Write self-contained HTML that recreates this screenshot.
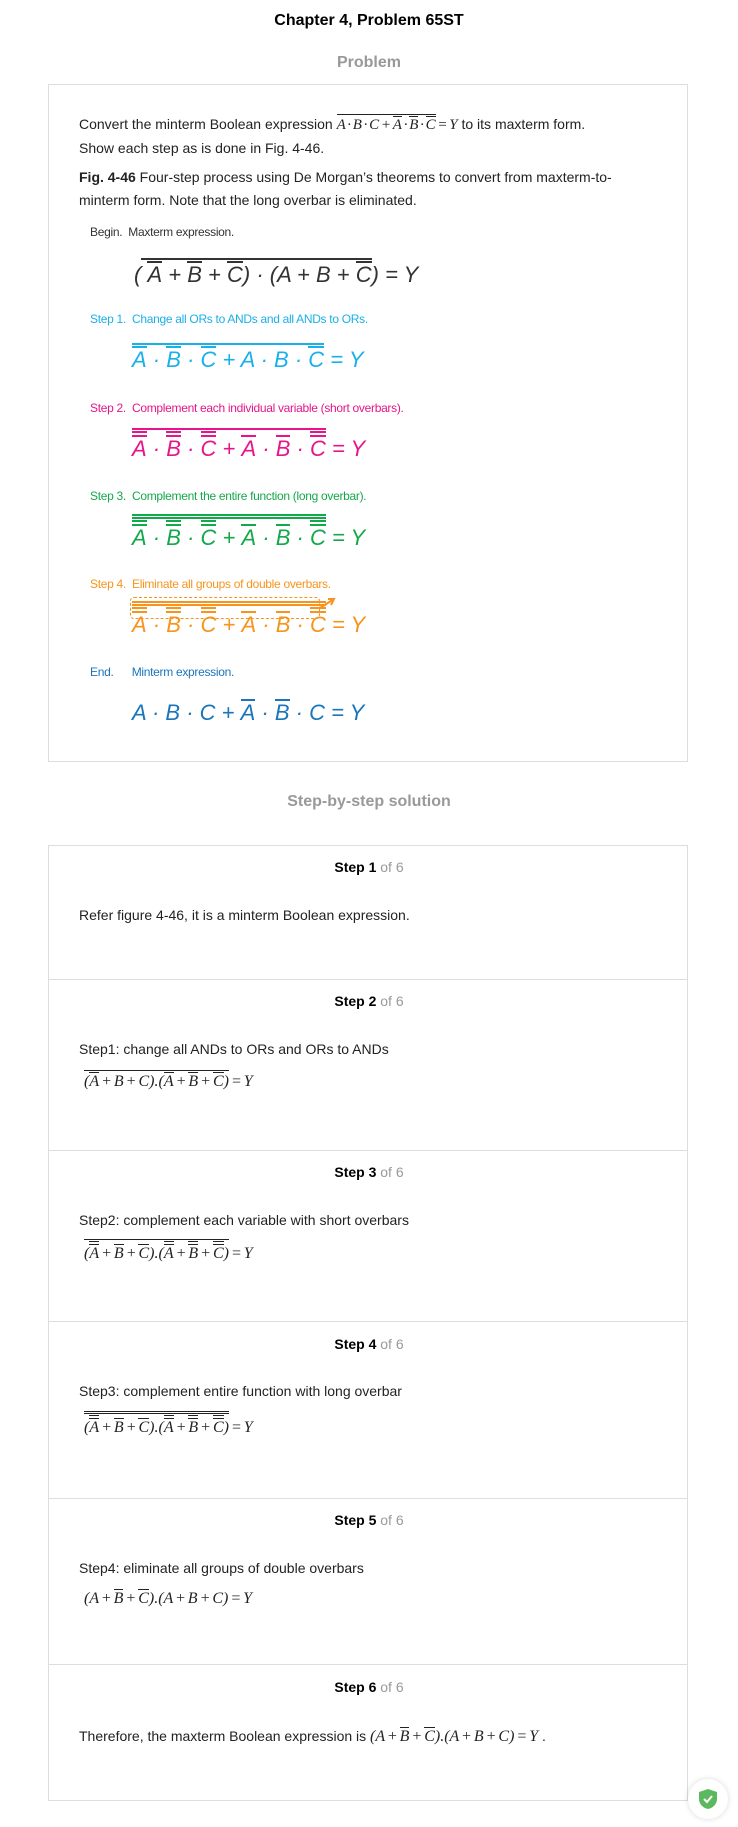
<!DOCTYPE html>
<html><head><meta charset="utf-8"><style>
*{margin:0;padding:0;box-sizing:border-box}
body{width:738px;height:1827px;background:#fff;font-family:"Liberation Sans",Arial,sans-serif;color:#222;position:relative;overflow:hidden}
.a{position:absolute;white-space:nowrap}
.c{left:0;width:738px;text-align:center}
.card{position:absolute;left:48px;width:640px;border:1px solid #ddd}
.t{font-size:14px;color:#222}
.lbl{font-size:12px;letter-spacing:-0.3px}
.ex{font-size:22px;font-style:italic;line-height:26px}
.o{display:inline-block;border-top:2px solid currentColor;padding-top:1px;line-height:1}
.o2{display:inline-block;border-top:2px solid currentColor;padding-top:2px;line-height:1}
.tm{font-family:"Liberation Serif",serif;font-style:italic;font-size:16px;color:#222;word-spacing:-2px}
.tm .o{border-top-width:1px;padding-top:1px}
.tm .o2{border-top-width:1px;padding-top:2px}
.hd{font-size:14px;font-weight:bold;color:#000}
.hd span{font-weight:normal;color:#999}
.hr{position:absolute;left:48px;width:640px;height:1px;background:#ddd}
</style></head><body>
<div class="a c" style="top:12px;font-size:16px;font-weight:bold;color:#000">Chapter 4, Problem 65ST</div>
<div class="a c" style="top:54px;font-size:16px;font-weight:bold;color:#999">Problem</div>
<div class="card" style="top:84px;height:678px"></div>
<div class="a t" style="left:79px;top:114px">Convert the minterm Boolean expression <span class="tm" style="font-size:15px"><span class="o">A · B · C + <span class="o">A</span> · <span class="o">B</span> · <span class="o">C</span></span> = Y</span> to its maxterm form.</div>
<div class="a t" style="left:79px;top:140px">Show each step as is done in Fig. 4-46.</div>
<div class="a t" style="left:79px;top:169px"><b>Fig. 4-46</b> Four-step process using De Morgan’s theorems to convert from maxterm-to-</div>
<div class="a t" style="left:79px;top:192px">minterm form. Note that the long overbar is eliminated.</div>

<div class="a lbl" style="left:90px;top:225px;color:#333">Begin.&nbsp;&nbsp;Maxterm expression.</div>
<div class="a ex" style="left:134px;top:258px;color:#333">(<span class="o">&nbsp;<span class="o">A</span> + <span class="o">B</span> + <span class="o">C</span>) · (A + B + <span class="o">C</span></span>) = Y</div>

<div class="a lbl" style="left:90px;top:312px;color:#1ab0e8">Step 1.&nbsp;&nbsp;Change all ORs to ANDs and all ANDs to ORs.</div>
<div class="a ex" style="left:132px;top:343px;color:#1ab0e8"><span class="o"><span class="o">A</span> · <span class="o">B</span> · <span class="o">C</span> + A · B · <span class="o">C</span></span> = Y</div>

<div class="a lbl" style="left:90px;top:401px;color:#e6168a">Step 2.&nbsp;&nbsp;Complement each individual variable (short overbars).</div>
<div class="a ex" style="left:132px;top:428px;color:#e6168a"><span class="o"><span class="o2"><span class="o">A</span></span> · <span class="o2"><span class="o">B</span></span> · <span class="o2"><span class="o">C</span></span> + <span class="o">A</span> · <span class="o">B</span> · <span class="o2"><span class="o">C</span></span></span> = Y</div>

<div class="a lbl" style="left:90px;top:489px;color:#13a84a">Step 3.&nbsp;&nbsp;Complement the entire function (long overbar).</div>
<div class="a ex" style="left:132px;top:514px;color:#13a84a"><span class="o"><span class="o"><span class="o2"><span class="o">A</span></span> · <span class="o2"><span class="o">B</span></span> · <span class="o2"><span class="o">C</span></span> + <span class="o">A</span> · <span class="o">B</span> · <span class="o2"><span class="o">C</span></span></span></span> = Y</div>

<div class="a lbl" style="left:90px;top:577px;color:#f7941d">Step 4.&nbsp;&nbsp;Eliminate all groups of double overbars.</div>
<div class="a" style="left:130px;top:597px;width:190px;height:22px;border:1.5px dashed #f7941d;border-radius:4px"></div>
<svg class="a" style="left:318px;top:596px" width="20" height="14"><path d="M2 12 L16 3 M10 3 L16 3 L13 9" stroke="#f7941d" stroke-width="2" fill="none"/></svg>
<div class="a ex" style="left:132px;top:601px;color:#f7941d"><span class="o"><span class="o"><span class="o2"><span class="o">A</span></span> · <span class="o2"><span class="o">B</span></span> · <span class="o2"><span class="o">C</span></span> + <span class="o">A</span> · <span class="o">B</span> · <span class="o2"><span class="o">C</span></span></span></span> = Y</div>

<div class="a lbl" style="left:90px;top:665px;color:#1a75bb">End.&nbsp;&nbsp;&nbsp;&nbsp;&nbsp;&nbsp;Minterm expression.</div>
<div class="a ex" style="left:132px;top:699px;color:#1a75bb">A · B · C + <span class="o">A</span> · <span class="o">B</span> · C = Y</div>

<div class="a c" style="top:793px;font-size:16px;font-weight:bold;color:#999">Step-by-step solution</div>
<div class="card" style="top:845px;height:956px"></div>
<div class="hr" style="top:979px"></div>
<div class="hr" style="top:1150px"></div>
<div class="hr" style="top:1321px"></div>
<div class="hr" style="top:1498px"></div>
<div class="hr" style="top:1664px"></div>

<div class="a c hd" style="top:859px">Step 1 <span>of 6</span></div>
<div class="a t" style="left:79px;top:907px">Refer figure 4-46, it is a minterm Boolean expression.</div>

<div class="a c hd" style="top:993px">Step 2 <span>of 6</span></div>
<div class="a t" style="left:79px;top:1041px">Step1: change all ANDs to ORs and ORs to ANDs</div>
<div class="a tm" style="left:84px;top:1070px"><span class="o">(<span class="o">A</span> + B + C).(<span class="o">A</span> + <span class="o">B</span> + <span class="o">C</span>)</span> = Y</div>

<div class="a c hd" style="top:1164px">Step 3 <span>of 6</span></div>
<div class="a t" style="left:79px;top:1212px">Step2: complement each variable with short overbars</div>
<div class="a tm" style="left:84px;top:1239px"><span class="o">(<span class="o2"><span class="o">A</span></span> + <span class="o">B</span> + <span class="o">C</span>).(<span class="o2"><span class="o">A</span></span> + <span class="o2"><span class="o">B</span></span> + <span class="o2"><span class="o">C</span></span>)</span> = Y</div>

<div class="a c hd" style="top:1336px">Step 4 <span>of 6</span></div>
<div class="a t" style="left:79px;top:1383px">Step3: complement entire function with long overbar</div>
<div class="a tm" style="left:84px;top:1411px"><span class="o"><span class="o">(<span class="o2"><span class="o">A</span></span> + <span class="o">B</span> + <span class="o">C</span>).(<span class="o2"><span class="o">A</span></span> + <span class="o2"><span class="o">B</span></span> + <span class="o2"><span class="o">C</span></span>)</span></span> = Y</div>

<div class="a c hd" style="top:1512px">Step 5 <span>of 6</span></div>
<div class="a t" style="left:79px;top:1560px">Step4: eliminate all groups of double overbars</div>
<div class="a tm" style="left:84px;top:1589px">(A + <span class="o">B</span> + <span class="o">C</span>).(A + B + C) = Y</div>

<div class="a c hd" style="top:1679px">Step 6 <span>of 6</span></div>
<div class="a t" style="left:79px;top:1727px">Therefore, the maxterm Boolean expression is <span class="tm">(A + <span class="o">B</span> + <span class="o">C</span>).(A + B + C) = Y</span> .</div>

<div class="a" style="left:688px;top:1779px;width:40px;height:40px;border-radius:50%;background:#fff;box-shadow:0 0 6px rgba(0,0,0,.15)"></div>
<svg class="a" style="left:698px;top:1788px" width="20" height="22" viewBox="0 0 20 22"><path d="M10 1 L19 4 L19 11 C19 16 15 20 10 21 C5 20 1 16 1 11 L1 4 Z" fill="#5cb85c"/><path d="M6 11 L9 14 L14 8" stroke="#fff" stroke-width="2" fill="none"/></svg>
</body></html>
